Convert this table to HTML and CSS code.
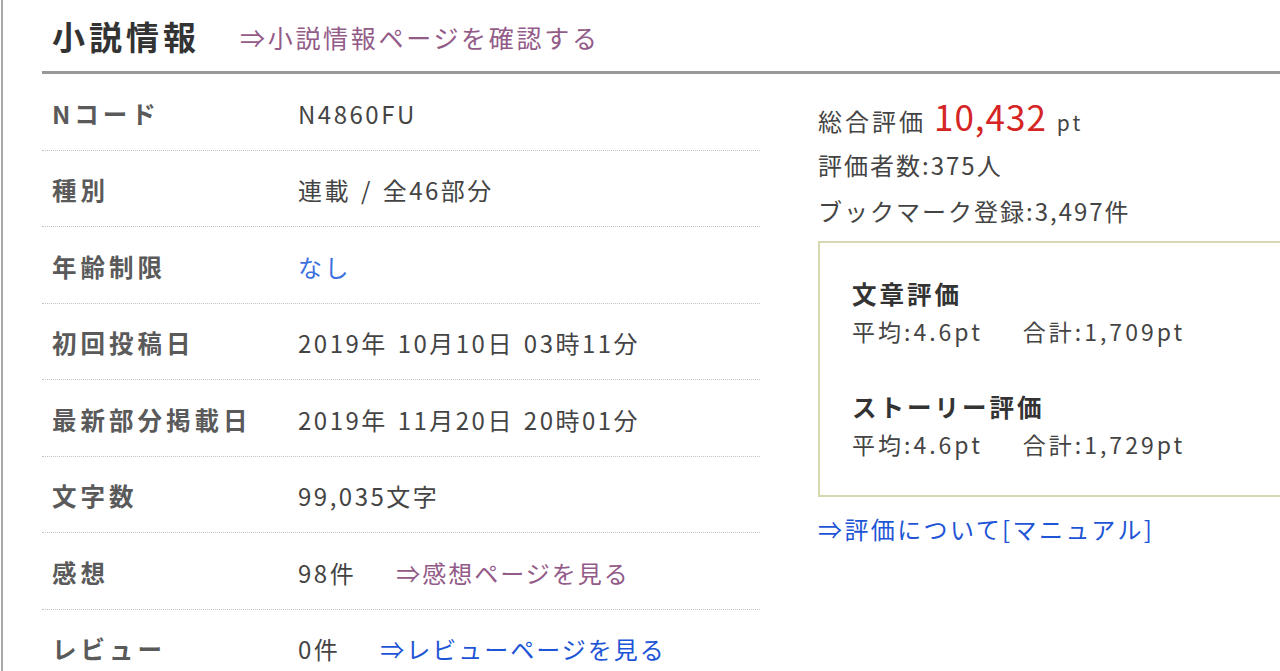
FILE: index.html
```html
<!DOCTYPE html>
<html lang="ja">
<head>
<meta charset="utf-8">
<title>小説情報</title>
<link rel="stylesheet" href="styles.css">
</head>
<body>
<div class="page">
  <div class="head">
    <h1 class="title">小説情報</h1>
    <a class="link-visited head-link" href="#">⇒小説情報ページを確認する</a>
  </div>
  <div class="main">
    <div class="table">
      <div class="row"><div class="label">Nコード</div><div class="value">N4860FU</div></div>
      <div class="row"><div class="label">種別</div><div class="value">連載 / 全46部分</div></div>
      <div class="row"><div class="label">年齢制限</div><div class="value"><span class="nashi">なし</span></div></div>
      <div class="row"><div class="label">初回投稿日</div><div class="value">2019年 10月10日 03時11分</div></div>
      <div class="row"><div class="label">最新部分掲載日</div><div class="value">2019年 11月20日 20時01分</div></div>
      <div class="row"><div class="label">文字数</div><div class="value">99,035文字</div></div>
      <div class="row"><div class="label">感想</div><div class="value">98件<a class="link-visited sub-link" href="#">⇒感想ページを見る</a></div></div>
      <div class="row"><div class="label">レビュー</div><div class="value">0件<a class="link-blue sub-link" href="#">⇒レビューページを見る</a></div></div>
    </div>
    <div class="side">
      <div class="total">総合評価 <span class="total-num">10,432</span> <span class="pt">pt</span></div>
      <div class="stat">評価者数:375人</div>
      <div class="stat">ブックマーク登録:3,497件</div>
      <div class="box">
        <div class="eval">
          <div class="eval-title">文章評価</div>
          <div class="eval-line"><span>平均:4.6pt</span><span>合計:1,709pt</span></div>
        </div>
        <div class="eval">
          <div class="eval-title">ストーリー評価</div>
          <div class="eval-line"><span>平均:4.6pt</span><span>合計:1,729pt</span></div>
        </div>
      </div>
      <a class="link-blue manual" href="#">⇒評価について[マニュアル]</a>
    </div>
  </div>
</div>
</body>
</html>
```

FILE: styles.css
```css
html, body {
  margin: 0;
  padding: 0;
  background: #fff;
}
body {
  font-family: "Noto Sans CJK JP", "Noto Sans", sans-serif;
  color: #333;
  overflow: hidden;
}
.page {
  border-left: 2px solid #a8a8a8;
  margin-left: 1px;
  padding-left: 39px;
  height: 671px;
  box-sizing: border-box;
}
.head {
  display: flex;
  align-items: center;
  border-bottom: 3px solid #999;
  box-sizing: border-box;
  height: 74px;
  padding-left: 10px;
  padding-top: 2px;
}
.title {
  margin: 0;
  font-size: 33px;
  font-weight: bold;
  letter-spacing: 4px;
  color: #333;
  line-height: 1;
}
.head-link {
  margin-left: 40px;
  font-size: 25px;
  letter-spacing: 2.7px;
}
a { text-decoration: none; }
.link-visited { color: #935b88; }
.link-blue { color: #1e55d6; }
.main {
  display: flex;
  align-items: flex-start;
}
.table {
  width: 718px;
  flex: none;
}
.row {
  display: flex;
  align-items: center;
  height: 76.5px;
  box-sizing: border-box;
  border-bottom: 1px dotted #c4c4c4;
  font-size: 24px;
  padding-top: 3px;
}
.label {
  width: 256px;
  padding-left: 10px;
  box-sizing: border-box;
  font-weight: bold;
  color: #5a5a5a;
  letter-spacing: 4px;
  flex: none;
  font-size: 24.5px;
}
.value {
  color: #444;
  letter-spacing: 2.5px;
  word-spacing: 2px;
}
.nashi { color: #3c6fe0; }
.sub-link { margin-left: 40px; letter-spacing: 2px; }
.side {
  margin-left: 58px;
  padding-top: 22px;
  flex: 1;
  min-width: 0;
  font-size: 24px;
  color: #444;
}
.total {
  display: flex;
  align-items: baseline;
  line-height: 40px;
  letter-spacing: 3px;
}
.total-num {
  color: #d42424;
  font-size: 35px;
  margin: 0 10px 0 8px;
  letter-spacing: 1px;
}
.pt { font-size: 21px; letter-spacing: 3px; }
.stat {
  line-height: 46px;
  letter-spacing: 2px;
}
.box {
  margin-top: 7px;
  border: 2px solid #d8d8b0;
  border-right: none;
  height: 256px;
  box-sizing: border-box;
  padding: 32px 0 0 32px;
}
.eval { margin-bottom: 39px; }
.eval-title {
  font-weight: bold;
  color: #333;
  font-size: 24.5px;
  letter-spacing: 3px;
  line-height: 38px;
}
.eval-line {
  display: flex;
  gap: 40px;
  letter-spacing: 3px;
  line-height: 36px;
  font-size: 23px;
}
.manual {
  display: block;
  margin-top: 14px;
  font-size: 24px;
  letter-spacing: 2.4px;
}
```
